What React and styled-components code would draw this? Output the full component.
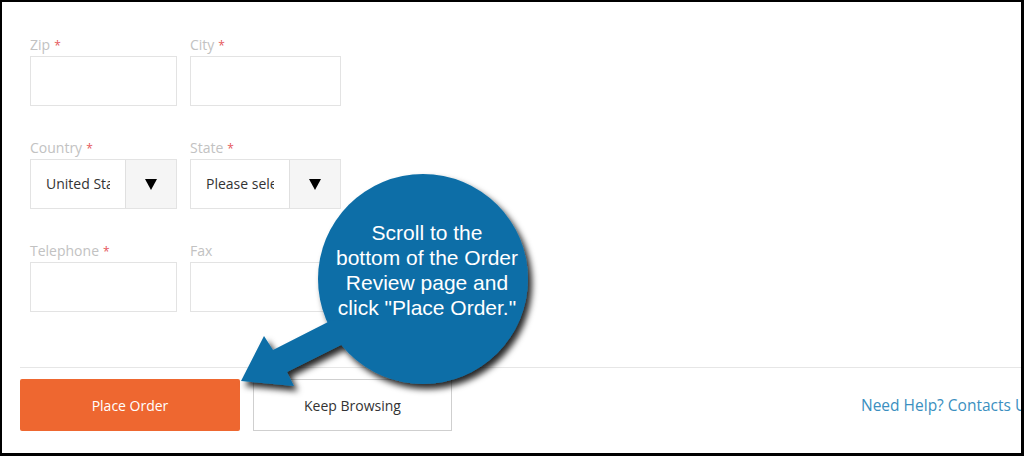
import React from "react";
import styled, { createGlobalStyle } from "styled-components";

const GlobalStyle = createGlobalStyle`
  html, body {
    margin: 0;
    padding: 0;
    background: #ffffff;
  }
  body {
    font-family: "Open Sans", "Liberation Sans", sans-serif;
  }
`;

//Layout
const Frame = styled.div`
  position: relative;
  width: 1024px;
  height: 456px;
  box-sizing: border-box;
  border-style: solid;
  border-color: #000;
  border-width: 2px 3px 3px 2px;
  background: #fff;
  overflow: hidden;
`;

const Form = styled.div`
  display: flex;
  flex-direction: column;
  gap: 32px;
  padding: 33px 0 0 28px;
`;

const Row = styled.div`
  display: flex;
  gap: 13px;
`;

const Field = styled.div`
  display: flex;
  flex-direction: column;
  width: ${(p) => p.width}px;
`;

const Label = styled.label`
  font-size: 14px;
  line-height: 20px;
  height: 20px;
  margin-bottom: 1px;
  color: #c2c2c2;
  span {
    color: #e5585c;
    margin-left: 4px;
    font-size: 12px;
  }
`;

const Input = styled.div`
  height: 50px;
  box-sizing: border-box;
  border: 1px solid #e3e3e3;
  background: #fff;
`;

const Select = styled.div`
  display: flex;
  height: 50px;
  box-sizing: border-box;
  border: 1px solid #e3e3e3;
  background: #fff;
`;

const SelectValue = styled.div`
  flex: 1;
  min-width: 0;
  padding: 0 15px;
  font-size: 14px;
  line-height: 48px;
  color: #333;
  span {
    display: block;
    overflow: hidden;
    white-space: nowrap;
  }
`;

const SelectArrow = styled.div`
  width: 50px;
  flex: none;
  display: flex;
  align-items: center;
  justify-content: center;
  background: #f5f5f5;
  border-left: 1px solid #e0e0e0;
  &::after {
    content: "";
    width: 0;
    height: 0;
    border-left: 6px solid transparent;
    border-right: 6px solid transparent;
    border-top: 11px solid #000;
  }
`;

//Footer actions
const Actions = styled.div`
  margin: 55px 0 0 18px;
  border-top: 1px solid #e6e6e6;
  padding-top: 11px;
  display: flex;
  align-items: center;
`;

const Button = styled.div`
  flex: none;
  height: 52px;
  box-sizing: border-box;
  width: ${(p) => p.width}px;
  display: flex;
  align-items: center;
  justify-content: center;
  font-size: 14px;
  background: ${(p) => (p.primary ? "#ee6730" : "#fff")};
  color: ${(p) => (p.primary ? "#fff" : "#333")};
  border: ${(p) => (p.primary ? "none" : "1px solid #cfcfcf")};
  border-radius: ${(p) => (p.primary ? "2px" : "0")};
  margin-left: ${(p) => p.offset || 0}px;
`;

const HelpLink = styled.a`
  flex: none;
  margin-left: 409px;
  font-size: 15.5px;
  color: #3b8fc0;
  white-space: nowrap;
  text-decoration: none;
`;

//Callout overlay
const Callout = styled.div`
  position: absolute;
  left: 218px;
  top: 158px;
  width: 340px;
  height: 250px;
  pointer-events: none;
`;

const CalloutText = styled.div`
  position: absolute;
  left: 0;
  top: 60px;
  width: 414px;
  text-align: center;
  font-family: "Liberation Sans", Arial, sans-serif;
  font-size: 21px;
  line-height: 25px;
  color: #fff;
`;

const BLUE = "#0b6ea7";

const CalloutShape = () => (
  <svg width="340" height="250" viewBox="220 160 340 250">
    <defs>
      <filter id="shadow" x="-20%" y="-20%" width="140%" height="140%">
        <feDropShadow dx="4" dy="5" stdDeviation="3" floodColor="#000" floodOpacity="0.85" />
      </filter>
    </defs>
    <g fill={BLUE} filter="url(#shadow)">
      <circle cx="423" cy="279" r="105" />
      <path d="M330 321 L273 350 L264 336 L241 381 L294 386 L287 372 L343 344 L372 318 Z" />
    </g>
  </svg>
);

const App = () => {
  return (
    <>
      <GlobalStyle />
      <Frame>
        <Form>
          <Row>
            <Field width={147}>
              <Label>
                Zip<span>*</span>
              </Label>
              <Input />
            </Field>
            <Field width={151}>
              <Label>
                City<span>*</span>
              </Label>
              <Input />
            </Field>
          </Row>
          <Row>
            <Field width={147}>
              <Label>
                Country<span>*</span>
              </Label>
              <Select>
                <SelectValue>
                  <span>United States</span>
                </SelectValue>
                <SelectArrow />
              </Select>
            </Field>
            <Field width={151}>
              <Label>
                State<span>*</span>
              </Label>
              <Select>
                <SelectValue>
                  <span>Please select</span>
                </SelectValue>
                <SelectArrow />
              </Select>
            </Field>
          </Row>
          <Row>
            <Field width={147}>
              <Label>
                Telephone<span>*</span>
              </Label>
              <Input />
            </Field>
            <Field width={151}>
              <Label>Fax</Label>
              <Input />
            </Field>
          </Row>
        </Form>

        <Actions>
          <Button primary width={220}>
            Place Order
          </Button>
          <Button width={199} offset={13}>
            Keep Browsing
          </Button>
          <HelpLink href="#">Need Help? Contacts Us</HelpLink>
        </Actions>

        <Callout>
          <CalloutShape />
          <CalloutText>
            Scroll to the
            <br />
            bottom of the Order
            <br />
            Review page and
            <br />
            click "Place Order."
          </CalloutText>
        </Callout>
      </Frame>
    </>
  );
};

export default App;
